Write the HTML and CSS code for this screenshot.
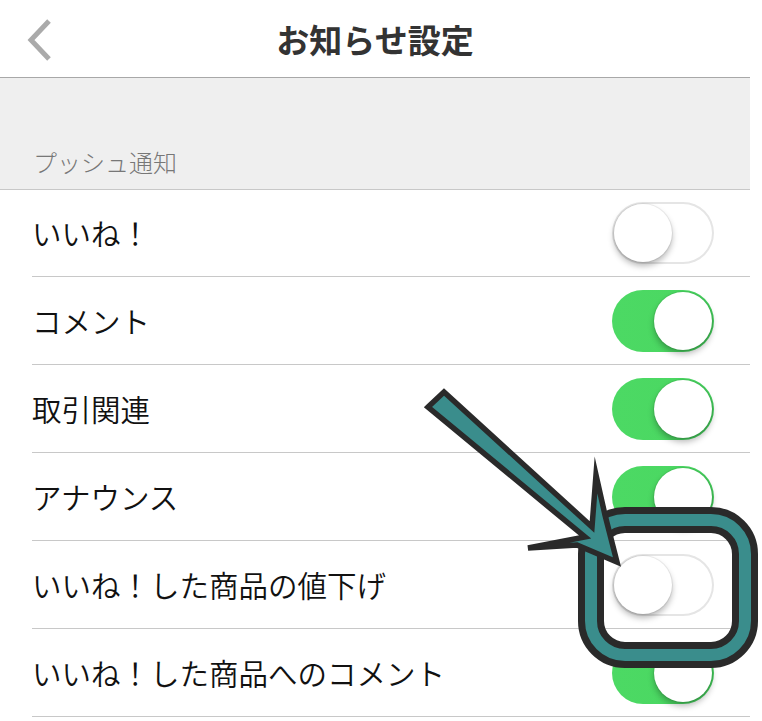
FILE: index.html
```html
<!DOCTYPE html>
<html lang="ja">
<head>
<meta charset="utf-8">
<title>お知らせ設定</title>
<link rel="stylesheet" href="styles.css">
</head>
<body>
<div class="page">
  <header class="nav">
    <div class="nav-left">
      <svg class="back" width="26" height="44" viewBox="0 0 26 44"><polyline points="22,3 4,22 22,41" fill="none" stroke="#aaaaaa" stroke-width="5"/></svg>
    </div>
    <h1 class="nav-title">お知らせ設定</h1>
    <div class="nav-right"></div>
  </header>
  <div class="section-head"><span>プッシュ通知</span></div>
  <ul class="list">
    <li class="row first"><span class="label">いいね！</span><span class="toggle"><span class="knob"></span></span></li>
    <li class="row"><span class="label">コメント</span><span class="toggle on"><span class="knob"></span></span></li>
    <li class="row"><span class="label">取引関連</span><span class="toggle on"><span class="knob"></span></span></li>
    <li class="row"><span class="label">アナウンス</span><span class="toggle on"><span class="knob"></span></span></li>
    <li class="row"><span class="label">いいね！した商品の値下げ</span><span class="toggle"><span class="knob"></span></span></li>
    <li class="row"><span class="label">いいね！した商品へのコメント</span><span class="toggle on"><span class="knob"></span></span></li>
  </ul>
</div>
<svg class="annotation" width="762" height="721" viewBox="0 0 762 721">
  <rect x="591" y="520" width="154" height="135" rx="34" ry="34" fill="none" stroke="#2a2a2a" stroke-width="26"/>
  <rect x="591" y="520" width="154" height="135" rx="34" ry="34" fill="none" stroke="#3a8d8c" stroke-width="12"/>
  <polygon points="428,407 444,392 592,527 596,475 605,515 617,562 577,545 528,548 585,537" fill="#3a8d8c" stroke="#2a2a2a" stroke-width="5.5" stroke-linejoin="miter" stroke-miterlimit="10"/>
</svg>
</body>
</html>
```
FILE: styles.css
```css
html, body {
  margin: 0;
  padding: 0;
  background: #ffffff;
}
body {
  width: 762px;
  height: 721px;
  overflow: hidden;
  position: relative;
  font-family: "Noto Sans CJK JP", "Noto Sans", sans-serif;
}
.page {
  width: 750px;
}
.nav {
  height: 77px;
  border-bottom: 1px solid #a8a8a8;
  display: grid;
  grid-template-columns: 1fr auto 1fr;
  align-items: center;
}
.nav-left {
  padding-left: 27px;
  display: flex;
  align-items: center;
  padding-top: 2px;
}
.back {
  display: block;
}
.nav-title {
  margin: 0;
  font-size: 33px;
  font-weight: 700;
  color: #333333;
  letter-spacing: 0;
  line-height: 1;
  padding-top: 2px;
}
.section-head {
  background: #efefef;
  border-bottom: 1px solid #c8c8c8;
  display: flex;
  align-items: flex-end;
  padding-left: 33px;
  box-sizing: border-box;
  height: 112px;
  padding-bottom: 15px;
}
.section-head span {
  font-size: 24px;
  font-weight: 300;
  line-height: 1;
  color: #777777;
}
.list {
  list-style: none;
  margin: 0;
  padding: 0 0 0 32px;
}
.row {
  height: 87px;
  border-bottom: 1px solid #c8c8c8;
  display: flex;
  align-items: center;
  justify-content: space-between;
  padding-right: 36px;
}
.row.first {
  height: 86px;
}
.label {
  font-size: 29.5px;
  font-weight: 350;
  color: #111111;
  line-height: 1;
}
.toggle {
  position: relative;
  width: 102px;
  height: 62px;
  border-radius: 31px;
  background: #ffffff;
  box-shadow: inset 0 0 0 2px #e5e5e5;
  flex: none;
}
.toggle.on {
  background: linear-gradient(90deg, #4cd964 0%, #4bd862 60%, #44cc5b 100%);
  box-shadow: none;
}
.knob {
  position: absolute;
  top: 2px;
  left: 2px;
  width: 58px;
  height: 58px;
  border-radius: 50%;
  background: #ffffff;
  box-shadow: 0 0 0 1px rgba(0,0,0,0.06), 0 4px 6px rgba(0,0,0,0.28);
}
.toggle.on .knob {
  left: 42px;
}
.annotation {
  position: absolute;
  left: 0;
  top: 0;
  pointer-events: none;
}
```
